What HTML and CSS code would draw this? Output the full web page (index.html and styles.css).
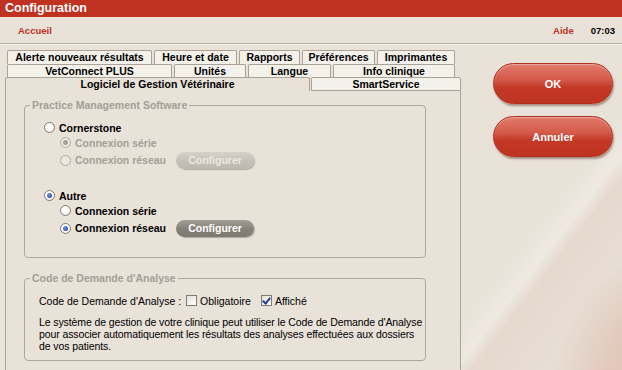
FILE: index.html
```html
<!DOCTYPE html>
<html lang="fr">
<head>
  <meta charset="UTF-8" />
  <title>Configuration</title>
  <link rel="stylesheet" href="styles.css">
</head>
<body>
  <div class="titlebar">Configuration</div>

  <div class="topbar">
    <a class="nav-link">Accueil</a>
    <span class="spacer"></span>
    <a class="nav-link">Aide</a>
    <span class="clock">07:03</span>
  </div>

  <div class="main">
    <div class="settings">
      <!-- onglets -->
      <div class="tab-row row-1">
        <div class="tab tab-alerts">Alerte nouveaux résultats</div>
        <div class="tab tab-date">Heure et date</div>
        <div class="tab tab-reports">Rapports</div>
        <div class="tab tab-prefs">Préférences</div>
        <div class="tab tab-printers">Imprimantes</div>
      </div>
      <div class="tab-row row-2">
        <div class="tab tab-vetconnect">VetConnect PLUS</div>
        <div class="tab tab-units">Unités</div>
        <div class="tab tab-lang">Langue</div>
        <div class="tab tab-clinic">Info clinique</div>
      </div>
      <div class="tab-row row-3">
        <div class="tab tab-active">Logiciel de Gestion Vétérinaire</div>
        <div class="tab tab-smart">SmartService</div>
      </div>

      <div class="panel">
        <fieldset class="group group-pms">
          <legend>Practice Management Software</legend>

          <div class="opt opt-main"><span class="radio"></span>Cornerstone</div>
          <div class="opt opt-sub disabled"><span class="radio checked"></span>Connexion série</div>
          <div class="opt opt-sub opt-btn disabled">
            <span class="radio"></span><span class="opt-text">Connexion réseau</span>
            <button class="pill-btn" disabled>Configurer</button>
          </div>

          <div class="opt opt-main opt-gap"><span class="radio checked"></span>Autre</div>
          <div class="opt opt-sub"><span class="radio"></span>Connexion série</div>
          <div class="opt opt-sub opt-btn">
            <span class="radio checked"></span><span class="opt-text">Connexion réseau</span>
            <button class="pill-btn">Configurer</button>
          </div>
        </fieldset>

        <fieldset class="group group-code">
          <legend>Code de Demande d'Analyse</legend>
          <div class="code-row">
            <span>Code de Demande d'Analyse :</span>
            <span class="check"></span><span>Obligatoire</span>
            <span class="check checked"></span><span>Affiché</span>
          </div>
          <p class="note">Le système de gestion de votre clinique peut utiliser le Code de Demande d'Analyse<br>
            pour associer automatiquement les résultats des analyses effectuées aux dossiers<br>
            de vos patients.</p>
        </fieldset>
      </div>
    </div>

    <div class="actions">
      <button class="big-btn">OK</button>
      <button class="big-btn">Annuler</button>
    </div>
  </div>
</body>
</html>
```

FILE: styles.css
```css
:root {
  --bg: #e8e2d8;
  --tab-bg: #f4f0ea;
  --line: #a8a299;
  --red: #bf3120;
  --muted: #a39f97;
}

body {
  margin: 0;
  width: 622px;
  height: 370px;
  overflow: hidden;
  font-family: 'Liberation Sans', Arial, sans-serif;
  color: #000;
  background:
    radial-gradient(circle at 715px 400px, rgba(214,150,132,0.5) 0, rgba(214,150,132,0.32) 115px, rgba(214,150,132,0) 165px),
    linear-gradient(128deg, rgba(255,255,255,0) 0, rgba(255,255,255,0) 560px, rgba(255,255,255,0.25) 585px, rgba(222,190,178,0.25) 600px, rgba(222,190,178,0) 700px),
    var(--bg);
}

.titlebar {
  height: 17px;
  line-height: 17px;
  padding-left: 5px;
  background: var(--red);
  color: #fff;
  font-size: 12.5px;
  font-weight: bold;
}

.topbar {
  height: 26px;
  display: flex;
  align-items: center;
  padding: 0 7px 0 18px;
  border-bottom: 1px solid #bab3a7;
  box-shadow: 0 1px 0 #f4f0ea;
  font-size: 9.5px;
  font-weight: bold;
}

.spacer {
  flex: 1;
}

.nav-link {
  color: #c0301f;
}

.clock {
  margin-left: 17px;
}

.main {
  display: flex;
  align-items: flex-start;
  padding: 6px 0 0 5px;
}

.settings {
  width: 456px;
  flex-shrink: 0;
}

/* onglets */
.tab-row {
  display: flex;
  gap: 2px;
  padding-left: 2px;
}

.row-2 .tab {
  height: 13px;
}

.row-3 {
  gap: 1px;
  padding-left: 0;
}

.tab {
  box-sizing: border-box;
  height: 14px;
  border: 1px solid var(--line);
  border-bottom: none;
  border-radius: 2px 2px 0 0;
  background: var(--tab-bg);
  font-size: 10.5px;
  font-weight: bold;
  line-height: 12px;
  text-align: center;
  white-space: nowrap;
  overflow: hidden;
}

.tab-alerts { width: 145px; }
.tab-date { width: 83px; }
.tab-reports { width: 61px; }
.tab-prefs { width: 73px; }
.tab-printers { width: 78px; }

.tab-vetconnect { width: 165px; }
.tab-units { width: 72px; }
.tab-lang { width: 83px; }
.tab-clinic { width: 122px; }

.tab-active {
  width: 305px;
  background: var(--bg);
}

.tab-smart {
  width: 150px;
  border-bottom: 1px solid var(--line);
}

.panel {
  height: 271px;
  border-left: 1px solid var(--line);
  border-right: 1px solid var(--line);
  background: var(--bg);
  padding-top: 8px;
}

/* groupes */
.group {
  width: 395px;
  margin: 0 0 0 18px;
  padding: 8px 0 20px 5px;
  border: 1px solid #aca79e;
  border-radius: 4px;
}

.group legend {
  padding: 0 2px;
  color: var(--muted);
  font-size: 10.5px;
  font-weight: bold;
  line-height: 13px;
}

.group-code {
  margin-top: 14px;
  padding-bottom: 8px;
}

.opt {
  height: 15px;
  display: flex;
  align-items: center;
  font-size: 10.5px;
  font-weight: bold;
}

.opt-main {
  padding-left: 14px;
}

.opt-sub {
  padding-left: 30px;
}

.opt-btn {
  height: 18px;
  margin-top: 1px;
}

.opt-gap {
  margin-top: 19px;
}

.opt-text {
  width: 101px;
}

.disabled {
  color: var(--muted);
}

.radio {
  box-sizing: border-box;
  width: 11px;
  height: 11px;
  margin-right: 4px;
  border: 1px solid #7f7c76;
  border-radius: 50%;
  background: radial-gradient(circle at 40% 35%, #fff 0, #fff 40%, #e4e1da 100%);
  display: flex;
  align-items: center;
  justify-content: center;
  flex-shrink: 0;
}

.radio.checked::after {
  content: '';
  width: 5px;
  height: 5px;
  border-radius: 50%;
  background: radial-gradient(circle at 35% 35%, #6f8fd8, #1f3d8f);
}

.disabled .radio {
  border-color: #aeaaa2;
  background: #ece8e1;
}

.disabled .radio.checked::after {
  background: #a6a29a;
}

.pill-btn {
  width: 78px;
  height: 17px;
  padding: 0;
  border: none;
  border-radius: 9px;
  background: linear-gradient(#a29d95, #858078 55%, #7c776f);
  box-shadow: 1px 1px 1px rgba(0,0,0,0.25);
  color: #fff;
  font-family: inherit;
  font-size: 10.5px;
  font-weight: bold;
}

.pill-btn:disabled {
  background: linear-gradient(#d6d2ca, #c4c0b8 55%, #bdb9b1);
  color: #ece9e3;
}

.code-row {
  height: 15px;
  display: flex;
  align-items: center;
  margin-left: 9px;
  font-size: 10.5px;
}

.check {
  box-sizing: border-box;
  width: 11px;
  height: 11px;
  margin: 0 3px 0 5px;
  border: 1px solid #7f7c76;
  background: linear-gradient(135deg, #e2dfd8, #fff);
  position: relative;
}

.check + span + .check {
  margin-left: 10px;
}

.check.checked::after {
  content: '';
  position: absolute;
  left: 2px;
  top: 0;
  width: 3px;
  height: 6px;
  border: solid #1f3d96;
  border-width: 0 2px 2px 0;
  transform: rotate(40deg);
}

.note {
  margin: 8px 0 0 9px;
  font-size: 10.5px;
  line-height: 12px;
  letter-spacing: -0.1px;
  white-space: nowrap;
}

/* boutons */
.actions {
  display: flex;
  flex-direction: column;
  gap: 12px;
  margin: 13px 0 0 32px;
}

.big-btn {
  width: 120px;
  height: 41px;
  border: 1px solid #b02c1b;
  border-radius: 21px;
  background: linear-gradient(#e07a6c 0%, #d45a49 40%, #c43826 60%, #bf3322 100%);
  box-shadow: 1px 2px 2px rgba(90,40,30,0.45), inset 0 1px 1px rgba(255,255,255,0.35);
  color: #fff;
  font-family: inherit;
  font-size: 11px;
  font-weight: bold;
}
```
